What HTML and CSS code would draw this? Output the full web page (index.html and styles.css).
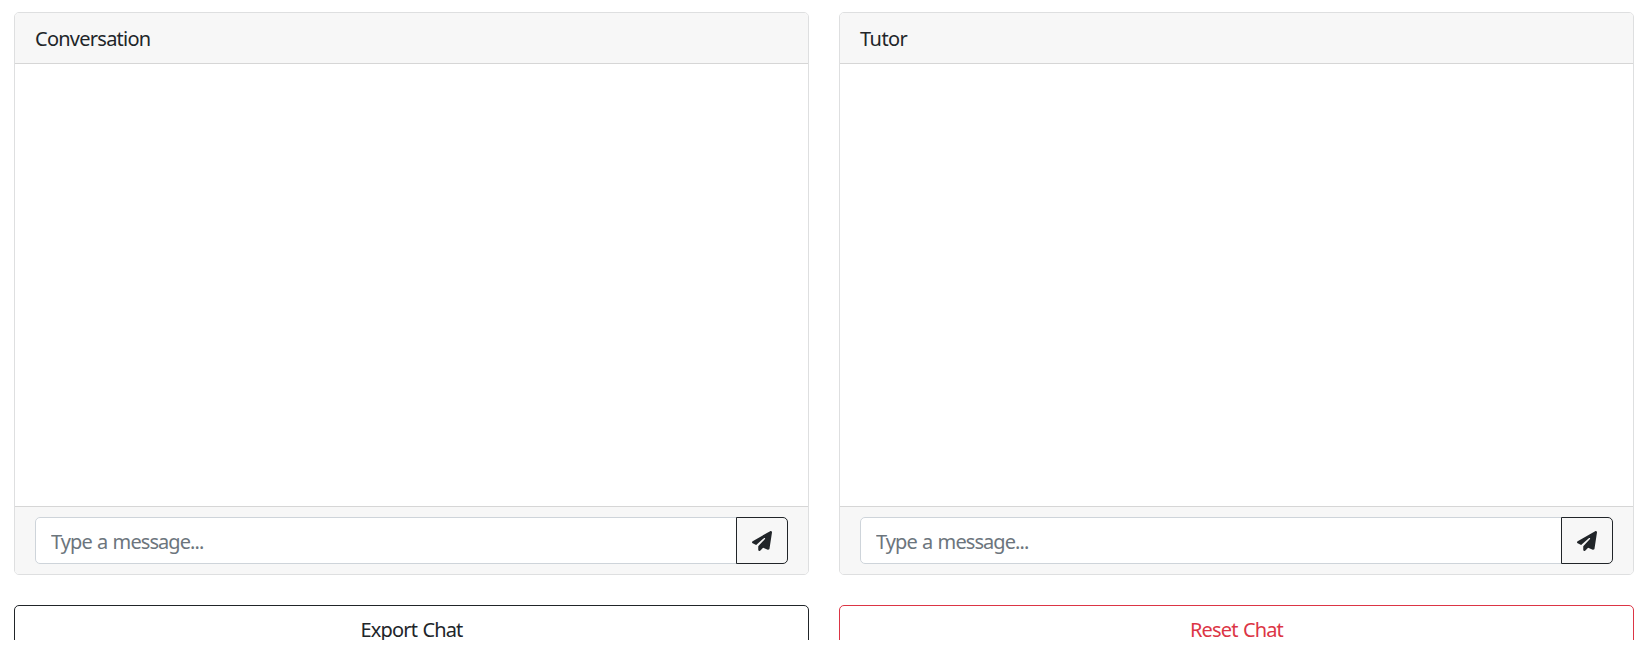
FILE: index.html
```html
<!DOCTYPE html>
<html lang="en">
<head>
<meta charset="utf-8">
<title>Chat</title>
<link rel="stylesheet" href="styles.css">
</head>
<body>
<main class="viewport">
  <div class="grid">
    <section class="card">
      <header class="card-header"><span class="title">Conversation</span></header>
      <div class="card-body"></div>
      <footer class="card-footer">
        <input class="field" type="text" placeholder="Type a message..." aria-label="Message">
        <button class="send" aria-label="Send">
          <svg viewBox="0 0 512 512"><path d="M498.1 5.6c10.1 7 15.4 19.1 13.5 31.2l-64 416c-1.5 9.7-7.4 18.2-16 23s-18.9 5.4-28 1.6L284 427.7l-68.5 74.1c-8.9 9.7-22.9 12.9-35.2 8.1S160 493.2 160 480V396.4c0-4 1.5-7.8 4.2-10.7L331.8 202.8c5.8-6.3 5.6-16-.4-22s-15.7-6.4-22-.7L106 360.8 17.7 316.6C7.1 311.3 .3 300.7 0 288.9s5.9-22.8 16.1-28.7l448-256c10.7-6.1 23.9-5.5 34 1.4z"/></svg>
        </button>
      </footer>
    </section>
    <section class="card">
      <header class="card-header"><span class="title title-short">Tutor</span></header>
      <div class="card-body"></div>
      <footer class="card-footer">
        <input class="field" type="text" placeholder="Type a message..." aria-label="Message to tutor">
        <button class="send" aria-label="Send">
          <svg viewBox="0 0 512 512"><path d="M498.1 5.6c10.1 7 15.4 19.1 13.5 31.2l-64 416c-1.5 9.7-7.4 18.2-16 23s-18.9 5.4-28 1.6L284 427.7l-68.5 74.1c-8.9 9.7-22.9 12.9-35.2 8.1S160 493.2 160 480V396.4c0-4 1.5-7.8 4.2-10.7L331.8 202.8c5.8-6.3 5.6-16-.4-22s-15.7-6.4-22-.7L106 360.8 17.7 316.6C7.1 311.3 .3 300.7 0 288.9s5.9-22.8 16.1-28.7l448-256c10.7-6.1 23.9-5.5 34 1.4z"/></svg>
        </button>
      </footer>
    </section>
    <button class="action action-dark">Export Chat</button>
    <button class="action action-danger">Reset Chat</button>
  </div>
</main>
</body>
</html>
```
FILE: styles.css
```css
* { box-sizing: border-box; }
body {
  margin: 0;
  background: #fff;
  color: #212529;
  font: 400 20px/30px "Noto Sans", "Open Sans", sans-serif;
  letter-spacing: -0.75px;
}
.viewport {
  height: 640px;
  padding: 12px 15px 0 14px;
  overflow: hidden;
}
.grid {
  display: grid;
  grid-template-columns: 795px 795px;
  column-gap: 30px;
  row-gap: 30px;
}
.card {
  display: flex;
  flex-direction: column;
  height: 563px;
  border: 1px solid #dedfe0;
  border-radius: 5px;
  overflow: hidden;
}
.card-header {
  height: 51px;
  padding: 11px 20px 9px;
  background: #f7f7f7;
  border-bottom: 1px solid #d6d6d6;
}
.title-short { letter-spacing: -0.55px; }
.card-body { flex: 1; }
.card-footer {
  display: flex;
  height: 68px;
  padding: 10px 20px;
  background: #f7f7f7;
  border-top: 1px solid #d6d6d6;
}
.field {
  flex: 1;
  min-width: 0;
  height: 47px;
  padding: 2px 15px 0;
  border: 1px solid #ced4da;
  border-radius: 5px 0 0 5px;
  background: #fff;
  font: inherit;
  letter-spacing: -0.93px;
  word-spacing: 1px;
  color: inherit;
}
.field::placeholder { color: #6c757d; opacity: 1; }
.send {
  display: flex;
  align-items: center;
  justify-content: center;
  width: 52px;
  height: 47px;
  margin-left: -1px;
  padding: 0;
  border: 1px solid #212529;
  border-radius: 0 5px 5px 0;
  background: transparent;
}
.send svg { width: 20px; height: 20px; fill: #212529; }
.action {
  height: 47px;
  padding: 2px 0 0;
  border: 1px solid;
  border-radius: 5px;
  background: transparent;
  font: inherit;
  letter-spacing: -0.85px;
  word-spacing: 1px;
}
.action-dark { color: #212529; }
.action-danger { color: #dc3545; }
```
